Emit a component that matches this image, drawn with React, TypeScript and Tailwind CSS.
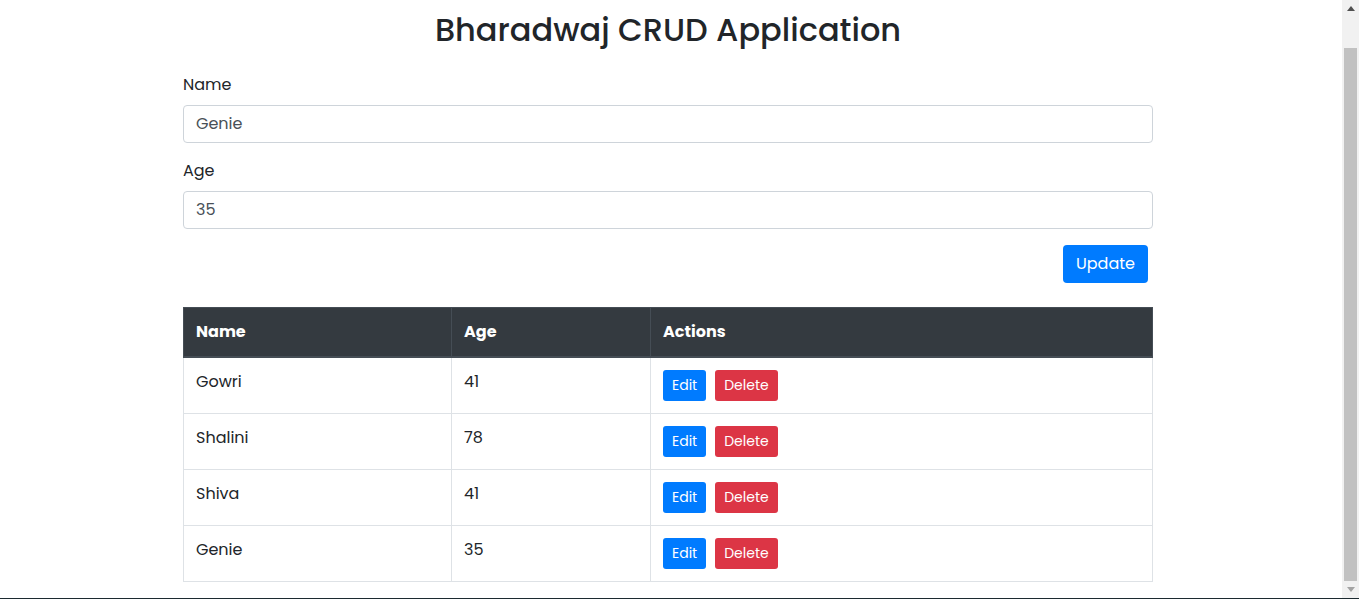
import React from "react";

const rows = [
  { name: "Gowri", age: 41 },
  { name: "Shalini", age: 78 },
  { name: "Shiva", age: 41 },
  { name: "Genie", age: 35 },
];

const font = { fontFamily: '"Poppins", "Open Sans", "Noto Sans", sans-serif' };

export default function App() {
  return (
    <div className="flex flex-col h-[599px] w-[1359px] overflow-hidden bg-white" style={font}>
      <div className="flex flex-1 min-h-0">
        <div className="flex-1 min-w-0 pl-[183px]">
          <div className="w-[970px] text-[#212529]">
            <h1 className="mt-[11px] text-center text-[32px] leading-[38px] font-medium text-[#212529]">
              Bharadwaj CRUD Application
            </h1>
            <div className="mt-[24px]">
              <label className="block text-[16px] leading-[24px] mb-[8px]">Name</label>
              <div className="h-[38px] border border-[#ced4da] rounded-[4px] px-[12px] flex items-center text-[16px] text-[#495057]">
                Genie
              </div>
            </div>
            <div className="mt-[16px]">
              <label className="block text-[16px] leading-[24px] mb-[8px]">Age</label>
              <div className="h-[38px] border border-[#ced4da] rounded-[4px] px-[12px] flex items-center text-[16px] text-[#495057]">
                35
              </div>
            </div>
            <div className="flex justify-end mt-[16px] pr-[5px]">
              <button className="h-[38px] w-[85px] bg-[#007bff] text-white text-[16px] rounded-[4px]">
                Update
              </button>
            </div>
            <table className="mt-[24px] w-[969px] table-fixed border-collapse text-[16px]">
              <colgroup>
                <col className="w-[268px]" />
                <col className="w-[199px]" />
                <col className="w-[502px]" />
              </colgroup>
              <thead>
                <tr className="bg-[#343a40] text-white">
                  <th className="text-left font-bold px-[12px] h-[49px] border border-[#454d55] border-b-2">Name</th>
                  <th className="text-left font-bold px-[12px] h-[49px] border border-[#454d55] border-b-2">Age</th>
                  <th className="text-left font-bold px-[12px] h-[49px] border border-[#454d55] border-b-2">Actions</th>
                </tr>
              </thead>
              <tbody>
                {rows.map((r) => (
                  <tr key={r.name}>
                    <td className="align-top px-[12px] pt-[12px] pb-[12px] leading-[24px] border border-[#dee2e6]">{r.name}</td>
                    <td className="align-top px-[12px] pt-[12px] pb-[12px] leading-[24px] border border-[#dee2e6]">{r.age}</td>
                    <td className="align-top px-[12px] pt-[12px] pb-[12px] border border-[#dee2e6]">
                      <div className="flex gap-[9px]">
                        <button className="h-[31px] px-[9px] bg-[#007bff] text-white text-[14px] rounded-[3px]">Edit</button>
                        <button className="h-[31px] px-[9px] bg-[#dc3545] text-white text-[14px] rounded-[3px]">Delete</button>
                      </div>
                    </td>
                  </tr>
                ))}
              </tbody>
            </table>
          </div>
        </div>
        <div className="w-[17px] bg-[#f1f1f1] flex flex-col items-center">
          <div className="h-[16px] flex items-center justify-center">
            <svg width="8" height="5" viewBox="0 0 8 5"><polygon points="4,0 8,5 0,5" fill="#505050" /></svg>
          </div>
          <div className="mt-[32px] w-[13px] h-[533px] bg-[#c1c1c1]" />
          <div className="flex-1 flex items-center justify-center">
            <svg width="8" height="5" viewBox="0 0 8 5"><polygon points="0,0 8,0 4,5" fill="#a3a3a3" /></svg>
          </div>
        </div>
      </div>
      <div className="h-[1px] bg-[#1c2a30]" />
    </div>
  );
}
